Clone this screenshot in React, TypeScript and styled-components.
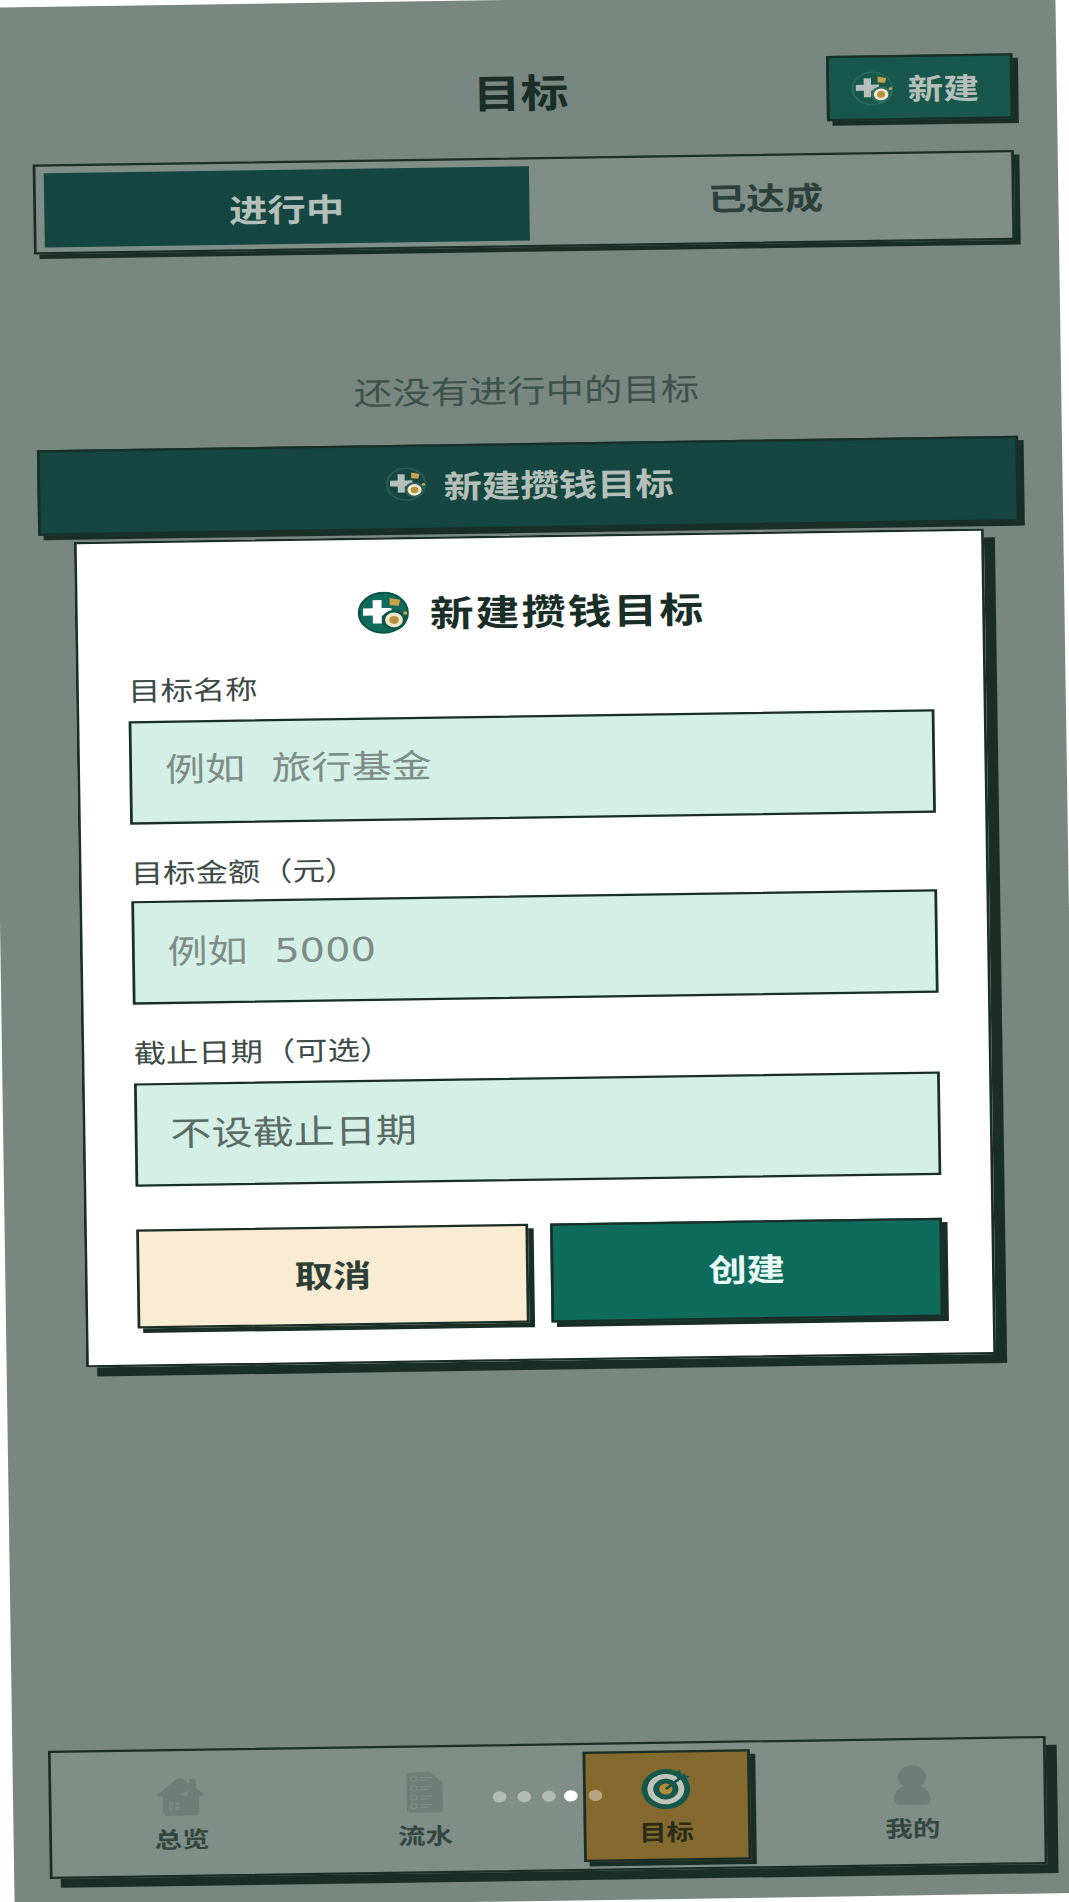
import React from "react";
import styled, { createGlobalStyle } from "styled-components";

const Global = createGlobalStyle`
  html, body { margin: 0; padding: 0; background: #fff; overflow: hidden; }
  * { box-sizing: border-box; }
`;

const Viewport = styled.div`
  width: 1069px;
  height: 1902px;
  display: flex;
  align-items: center;
  justify-content: center;
  overflow: hidden;
  background: #fff;
  font-family: "DejaVu Sans", "Noto Sans CJK SC", sans-serif;
`;

const Stage = styled.div`
  flex: none;
  position: relative;
  width: 390px;
  height: 845.33px;
  display: flex;
  flex-direction: column;
  padding: 27px 16.2px 13px 16px;
  background: #78877f;
  transform: rotate(-0.85deg) scale(2.741, 2.25);
`;

const Header = styled.header`
  display: grid;
  grid-template-columns: 1fr auto 1fr;
  align-items: center;
  height: 29px;
`;

const PageTitle = styled.h1`
  grid-column: 2;
  margin: 0;
  padding: 0 1px 3px 0;
  font-size: 17.5px;
  font-weight: 700;
  color: #1a2e28;
`;

const NewButton = styled.button`
  grid-column: 3;
  justify-self: end;
  display: flex;
  align-items: center;
  gap: 5px;
  height: 29px;
  margin-right: -0.4px;
  padding: 0 11.6px 0 8.3px;
  border: 1px solid #1a2e28;
  background: #18574b;
  box-shadow: 2px 2px 0 #1a2e28;
  color: #b4bfba;
  font: 700 13px "DejaVu Sans", "Noto Sans CJK SC", sans-serif;
  white-space: nowrap;
`;

const Tabs = styled.div`
  display: grid;
  grid-template-columns: 176.4px 1fr;
  align-items: start;
  height: 39.6px;
  margin-top: 14px;
  padding: 3px 3px 0 3.2px;
  border: 1px solid #1a2e28;
  background: #808e88;
  box-shadow: 2px 2px 0 #1a2e28;
`;

const Tab = styled.div<{ $active?: boolean }>`
  display: flex;
  align-items: center;
  justify-content: center;
  height: ${(p) => (p.$active ? "33px" : "29px")};
  padding-top: ${(p) => (p.$active ? "1.4px" : "0")};
  font-size: 14px;
  font-weight: 700;
  background: ${(p) => (p.$active ? "#15463f" : "transparent")};
  color: ${(p) => (p.$active ? "#b4bfba" : "#2c413b")};
`;

const EmptyText = styled.p`
  margin: 54.3px 0 0;
  height: 20px;
  line-height: 20px;
  text-align: center;
  font-size: 14px;
  color: #3d524b;
`;

const WideButton = styled.button`
  display: flex;
  align-items: center;
  justify-content: center;
  gap: 6px;
  height: 37.5px;
  margin-top: 13.3px;
  padding: 0 0 2px 1.5px;
  border: 1px solid #1a2e28;
  background: #15463f;
  box-shadow: 2px 2px 0 #1a2e28;
  color: #b4bfba;
  font: 700 14px "DejaVu Sans", "Noto Sans CJK SC", sans-serif;
`;

const Nav = styled.nav`
  display: flex;
  justify-content: space-around;
  align-items: center;
  height: 57.5px;
  margin: auto -3.4px 0 -3px;
  padding: 0 3.7px 0 3px;
  border: 1px solid #1a2e28;
  background: #808e88;
  box-shadow: 4px 4px 0 #1a2e28;
`;

const NavItem = styled.div<{ $active?: boolean }>`
  width: 61px;
  height: 49px;
  margin: ${(p) => (p.$active ? "0 1px 0 -1px" : "0")};
  display: flex;
  flex-direction: column;
  align-items: center;
  justify-content: center;
  gap: 4px;
  padding-top: ${(p) => (p.$active ? "1px" : "3.4px")};
  font-size: 10px;
  line-height: 14px;
  font-weight: 700;
  color: ${(p) => (p.$active ? "#2a2c16" : "#33473f")};
  background: ${(p) => (p.$active ? "#846a2e" : "transparent")};
  border: 1px solid ${(p) => (p.$active ? "#1a2e28" : "transparent")};
  box-shadow: ${(p) => (p.$active ? "2px 2px 0 #1a2e28" : "none")};
`;

const Dots = styled.div`
  position: absolute;
  left: 0;
  right: 0;
  bottom: 44px;
  display: flex;
  justify-content: center;
  gap: 3.6px;
  z-index: 3;
`;

const Dot = styled.span<{ $active?: boolean }>`
  width: 5px;
  height: 5px;
  border-radius: 50%;
  background: ${(p) => (p.$active ? "#fff" : "rgba(255,255,255,.4)")};
`;

const Overlay = styled.div`
  position: absolute;
  inset: 0;
  display: flex;
  align-items: center;
  justify-content: center;
  padding-bottom: 2.7px;
  z-index: 2;
`;

const Modal = styled.div`
  width: 332px;
  padding: 20px 18px 16px;
  border: 1px solid #1a2e28;
  background: #fff;
  box-shadow: 4px 4px 0 #1a2e28;
`;

const ModalTitle = styled.h2`
  display: flex;
  align-items: center;
  justify-content: center;
  gap: 7.2px;
  height: 24px;
  margin: 0 0 14px;
  padding-left: 1.2px;
  font-size: 16px;
  font-weight: 700;
  letter-spacing: 0.75px;
  color: #1a2e28;
`;

const Field = styled.div`
  margin-bottom: 14px;
`;

const Label = styled.label`
  display: block;
  height: 17px;
  line-height: 17px;
  margin-bottom: 3.5px;
  font-size: 11.8px;
  color: #3d4b46;
`;

const TextInput = styled.input`
  display: block;
  width: 100%;
  height: 46px;
  padding: 0 12px 2px;
  border: 1px solid #1a2e28;
  border-radius: 0;
  outline: none;
  background: #d4f0e6;
  font: 14.6px "DejaVu Sans", "Noto Sans CJK SC", sans-serif;
  word-spacing: 0.2px;
  color: #1a2e28;
  &::placeholder {
    color: #7d8c86;
    opacity: 1;
  }
`;

const DateBox = styled.div`
  display: flex;
  align-items: center;
  height: 46px;
  padding: 0 12px 2px;
  border: 1px solid #1a2e28;
  background: #d4f0e6;
  font-size: 15px;
  color: #5a6b65;
`;

const Actions = styled.div`
  display: grid;
  grid-template-columns: 1fr 1fr;
  gap: 8px;
  margin-top: 19px;
`;

const ActionButton = styled.button<{ $primary?: boolean }>`
  height: 44px;
  padding: 0 0 2px;
  border: 1px solid #1a2e28;
  border-radius: 0;
  background: ${(p) => (p.$primary ? "#0f6b5c" : "#f9ecd2")};
  color: ${(p) => (p.$primary ? "#eafaf5" : "#2e3f38")};
  box-shadow: 2px 2px 0 #1a2e28;
  font: 700 14px "DejaVu Sans", "Noto Sans CJK SC", sans-serif;
`;

const IconSvg = styled.svg<{ $size: number }>`
  display: block;
  flex: none;
  width: ${(p) => p.$size}px;
  height: ${(p) => p.$size}px;
`;

const AddGoalIcon = ({ size, ring, disc, plus }: { size: number; ring: string; disc: string; plus: string }) => (
  <IconSvg $size={size} viewBox="0 0 32 32">
    <circle cx="16" cy="16" r="15" fill={disc} stroke={ring} strokeWidth="1.4" />
    <path d="M9.5 6.5h5.5v6h6v5.500h-6v6H9.500v-6h-6v-5.500h6z" fill={plus} />
    <path d="M20 5l6.500 1.500-1 4.500-5.500-.5z" fill="#c9a24a" />
    <circle cx="22.500" cy="21.500" r="7.500" fill={ring} />
    <circle cx="22.500" cy="21.500" r="5.500" fill="#efe6cc" />
    <circle cx="22.500" cy="21.500" r="3" fill="#b8923a" />
    <circle cx="29.500" cy="16.500" r="1.300" fill="#c9a24a" />
  </IconSvg>
);

const HouseIcon = () => (
  <IconSvg $size={18} viewBox="0 0 24 24">
    <path
      d="M11.800 1.500c.6 0 1.100.3 1.600.7l2.900 2.300V2.300c0-.3.200-.5.500-.5h2.400c.3 0 .5.200.5.500v5.300l3.300 2.900c.9.800.4 1.700-.6 1.700h-1.200v9.500c0 1-.7 1.800-1.700 1.800H5.300c-1 0-1.700-.8-1.700-1.800V12.200H1.900c-1 0-1.400-.9-.6-1.700L10.200 2.200c.5-.4 1-.7 1.600-.7z"
      fill="#6e7d77"
    />
    <path d="M6.500 15.500h2v2h-2zM9.500 15.500h2v2h-2zM6.500 18.500h2v2h-2zM9.500 18.500h2v2h-2z" fill="#7a8882" />
    <path d="M12.500 11l4-3-1.500 4.500z" fill="#7a8882" />
  </IconSvg>
);

const LedgerIcon = () => (
  <IconSvg $size={18} viewBox="0 0 24 24">
    <path
      d="M5.500 0h9.500l6 6v16c0 1.100-.9 2-2 2H5.500c-1.100 0-2-.9-2-2V2c0-1.100.9-2 2-2z"
      fill="#6e7d77"
    />
    {[4, 9.5, 15, 20].map((y) => (
      <g key={y}>
        <circle cx="7" cy={y} r="1.500" fill="none" stroke="#7d8b85" strokeWidth=".8" />
        <path d={`M10 ${y - 0.8}h6M10 ${y + 0.8}h4`} stroke="#7d8b85" strokeWidth=".7" />
      </g>
    ))}
  </IconSvg>
);

const TargetIcon = () => (
  <IconSvg $size={19} viewBox="0 0 30 31">
    <circle cx="14.500" cy="16.500" r="14.500" fill="#15574b" />
    <circle cx="14.500" cy="16.500" r="11" fill="#bfc5b9" />
    <circle cx="14.500" cy="16.500" r="7.500" fill="#15574b" />
    <circle cx="14.500" cy="16.500" r="4" fill="#b58d3a" />
    <path d="M14.500 16.500L26 6" stroke="#15574b" strokeWidth="1.800" />
    <path d="M23 2.500l1 4 5 1-3 3-4.500-1-1-4.500z" fill="#15574b" />
  </IconSvg>
);

const PersonIcon = () => (
  <IconSvg $size={18} viewBox="0 0 24 24">
    <circle cx="12" cy="7.200" r="6.800" fill="#6e7d77" />
    <path
      d="M8 12.500c2.400 1.800 5.600 1.800 8 0 2.800 1.200 4.800 4.300 4.800 7.800 0 2.200-1.200 3.200-3 3.200H6.200c-1.800 0-3-1-3-3.200 0-3.500 2-6.600 4.800-7.800z"
      fill="#6e7d77"
    />
  </IconSvg>
);

export default function App() {
  return (
    <Viewport>
      <Global />
      <Stage>
        <Header>
          <PageTitle>目标</PageTitle>
          <NewButton>
            <AddGoalIcon size={15.500} ring="#2b6c60" disc="#18574b" plus="#b4bfba" />
            新建
          </NewButton>
        </Header>
        <Tabs>
          <Tab $active>进行中</Tab>
          <Tab>已达成</Tab>
        </Tabs>
        <EmptyText>还没有进行中的目标</EmptyText>
        <WideButton>
          <AddGoalIcon size={15} ring="#2b5f55" disc="#15463f" plus="#b4bfba" />
          新建攒钱目标
        </WideButton>

        <Nav>
          <NavItem>
            <HouseIcon />
            总览
          </NavItem>
          <NavItem>
            <LedgerIcon />
            流水
          </NavItem>
          <NavItem $active>
            <TargetIcon />
            目标
          </NavItem>
          <NavItem>
            <PersonIcon />
            我的
          </NavItem>
        </Nav>

        <Dots>
          <Dot />
          <Dot />
          <Dot />
          <Dot $active />
          <Dot />
        </Dots>

        <Overlay>
          <Modal>
            <ModalTitle>
              <AddGoalIcon size={19} ring="#0b5448" disc="#0f6b5c" plus="#ffffff" />
              新建攒钱目标
            </ModalTitle>
            <Field>
              <Label>目标名称</Label>
              <TextInput placeholder="例如  旅行基金" />
            </Field>
            <Field>
              <Label>目标金额（元）</Label>
              <TextInput placeholder="例如  5000" />
            </Field>
            <Field>
              <Label>截止日期（可选）</Label>
              <DateBox>不设截止日期</DateBox>
            </Field>
            <Actions>
              <ActionButton>取消</ActionButton>
              <ActionButton $primary>创建</ActionButton>
            </Actions>
          </Modal>
        </Overlay>
      </Stage>
    </Viewport>
  );
}
